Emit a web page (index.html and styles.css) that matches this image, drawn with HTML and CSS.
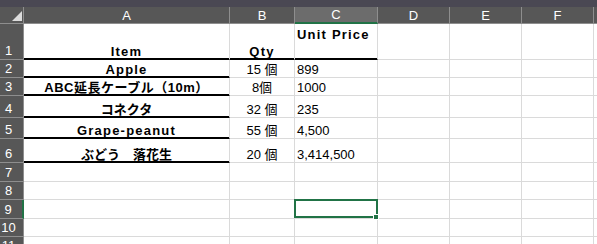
FILE: index.html
```html
<!DOCTYPE html>
<html lang="ja">
<head>
  <meta charset="UTF-8" />
  <meta name="viewport" content="width=device-width, initial-scale=1.0" />
  <title>Book1</title>
  <link rel="stylesheet" href="styles.css">
</head>
<body>
  <div class="ribbon-edge"></div>
  <div class="sheet" id="sheet"></div>

  <script>
    const columns = ["A", "B", "C", "D", "E", "F", ""];
    // item, qty, unit price
    const data = [
      ["Item", "Qty", "Unit Price"],
      ["Apple", "15 個", "899"],
      ["ABC延長ケーブル（10m）", "8個", "1000"],
      ["コネクタ", "32 個", "235"],
      ["Grape-peanut", "55 個", "4,500"],
      ["ぶどう　落花生", "20 個", "3,414,500"]
    ];
    const rowCount = 12;
    const activeRow = 9;
    const activeCol = 2;

    const sheet = document.getElementById("sheet");

    function addCell(text, classes) {
      const cell = document.createElement("div");
      cell.className = classes;
      if (text) {
        const span = document.createElement("span");
        span.textContent = text;
        cell.appendChild(span);
      }
      sheet.appendChild(cell);
    }

    addCell("", "corner");
    columns.forEach((name, j) => {
      addCell(name, "col-head" + (j === activeCol ? " on" : ""));
    });

    for (let i = 1; i <= rowCount; i++) {
      addCell(String(i), "row-head" + (i === activeRow ? " on" : ""));
      const values = data[i - 1] || [];
      for (let j = 0; j < columns.length; j++) {
        const text = values[j] || "";
        let cls = "cell";
        if (j === 0 && values.length) cls += " item line";
        if (j === 1) cls += " qty";
        if (i === 1 && j < 3) cls += " bold line";
        if (i === 1 && j === 2) cls += " top";
        if (/[\u3040-\u30ff\u4e00-\u9fff]/.test(text) && j === 0) cls += " jp";
        if (text.startsWith("ABC")) cls += " mixed";
        if (i === activeRow && j === activeCol) cls += " active";
        addCell(text, cls);
      }
    }
  </script>
</body>
</html>
```

FILE: styles.css
```css
body {
  margin: 0;
  background: #fff;
  overflow: hidden;
  font-family: "Liberation Sans", "Noto Sans CJK JP", sans-serif;
}

.ribbon-edge {
  height: 7px;
  background: #4a4853;
}

.sheet {
  display: grid;
  grid-template-columns: 24px 206px 65px 83px 72px 72px 72px 1fr;
  grid-template-rows: 17px 36px 18px 18px 22px 21px 24px 19px 18px 19px 18px 18px 18px;
}

.sheet > div {
  box-sizing: border-box;
  display: flex;
  min-width: 0;
  overflow: hidden;
  white-space: nowrap;
}

/* headers */
.corner {
  background: #575757;
  border-right: 1px solid #8e8e8e;
  border-bottom: 1px solid #8e8e8e;
  justify-content: flex-end;
  align-items: flex-end;
  padding: 0 1px 2px 0;
}

.corner::after {
  content: "";
  width: 0;
  height: 0;
  border-left: 10px solid transparent;
  border-bottom: 10px solid #dcdcdc;
}

.col-head {
  background: #575757;
  color: #fff;
  font-size: 13px;
  justify-content: center;
  align-items: center;
  border-right: 1px solid #8e8e8e;
  border-bottom: 1px solid #8e8e8e;
}

.col-head.on {
  background: #6c6c6c;
  border-bottom: 2px solid #217346;
}

.row-head {
  background: #575757;
  color: #fff;
  font-size: 13px;
  line-height: 14px;
  justify-content: center;
  align-items: flex-end;
  padding: 0 6px 1px 0;
  border-right: 1px solid #8e8e8e;
  border-bottom: 1px solid #8e8e8e;
}

.row-head.on {
  border-right: 2px solid #217346;
}

/* cells */
.cell {
  font-size: 13px;
  line-height: 14px;
  color: #000;
  align-items: flex-end;
  padding: 0 2px;
  border-right: 1px solid #dadada;
  border-bottom: 1px solid #dadada;
}

.item,
.qty {
  justify-content: center;
}

.item,
.bold {
  font-weight: bold;
  letter-spacing: 1.2px;
}

.jp {
  letter-spacing: 0;
}

.mixed {
  letter-spacing: 0.5px;
}

.top {
  align-items: flex-start;
  padding-top: 4px;
}

.line {
  border-bottom-color: #000;
  box-shadow: inset 0 -1px #000;
}

.active {
  position: relative;
  z-index: 1;
  overflow: visible !important;
}

.active::after {
  content: "";
  position: absolute;
  left: -1px;
  top: -1px;
  right: -1px;
  bottom: 0;
  border: 2px solid #217346;
}

.active::before {
  content: "";
  position: absolute;
  right: -2px;
  bottom: -2px;
  width: 4px;
  height: 4px;
  background: #217346;
  border: 1px solid #fff;
  z-index: 2;
}
```
